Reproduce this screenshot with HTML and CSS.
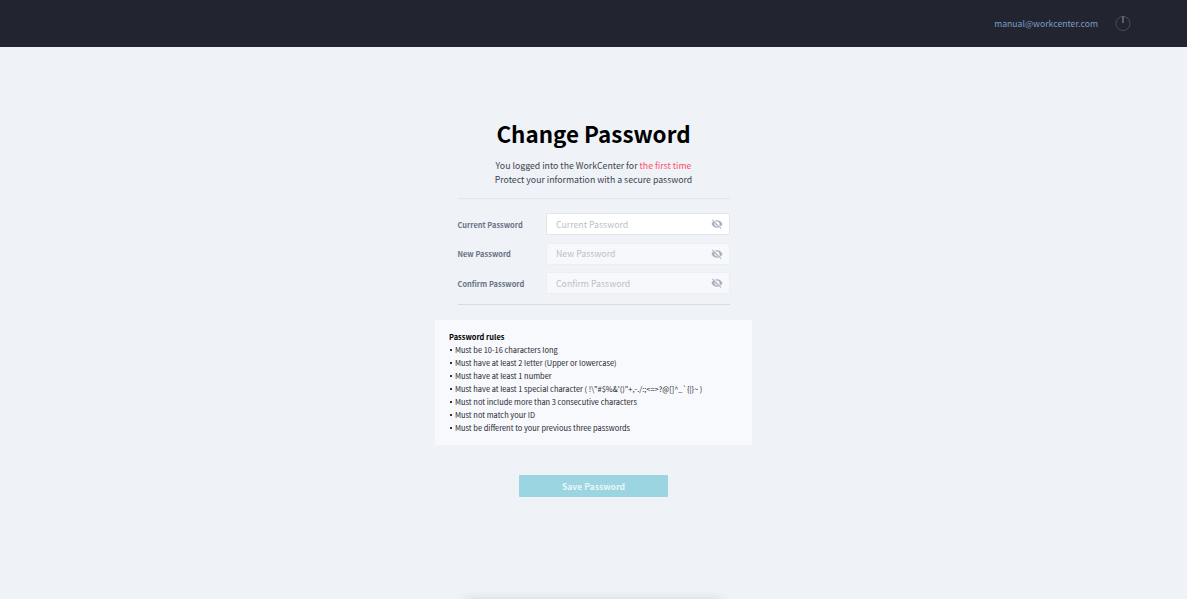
FILE: index.html
```html
<!DOCTYPE html>
<html lang="en">
<head>
  <meta charset="UTF-8">
  <meta name="viewport" content="width=device-width, initial-scale=1.0">
  <title>Change Password</title>
  <link rel="stylesheet" href="styles.css">
</head>
<body>
  <header class="topbar">
    <span class="user-email">manual@workcenter.com</span>
    <button class="power-btn" type="button" aria-label="Log out">
      <svg width="16" height="16" viewBox="0 0 16 16" fill="none">
        <circle cx="8" cy="8.5" r="7" stroke="#4a4e5a" stroke-width="1"/>
        <path d="M8 1v7" stroke="#6b6f7a" stroke-width="1.6"/>
      </svg>
    </button>
  </header>

  <main class="page">
    <h1 class="title">Change Password</h1>
    <p class="intro">
      You logged into the WorkCenter for <span class="red">the first time</span><br>
      Protect your information with a secure password
    </p>

    <form class="pw-form">
      <div class="row">
        <label for="current">Current Password</label>
        <div class="field active">
          <input type="password" id="current" placeholder="Current Password">
          <svg class="eye" viewBox="0 0 24 24"><path d="M12 7c2.76 0 5 2.24 5 5 0 .65-.13 1.26-.36 1.83l2.92 2.92c1.51-1.26 2.7-2.89 3.43-4.75-1.73-4.39-6-7.5-11-7.5-1.4 0-2.74.25-3.98.7l2.16 2.16C10.74 7.13 11.35 7 12 7zM2 4.27l2.28 2.28.46.46C3.08 8.3 1.78 10.02 1 12c1.73 4.39 6 7.5 11 7.5 1.55 0 3.03-.3 4.38-.84l.42.42L19.73 22 21 20.73 3.27 3 2 4.27zM7.53 9.8l1.55 1.55c-.05.21-.08.43-.08.65 0 1.66 1.34 3 3 3 .22 0 .44-.03.65-.08l1.55 1.55c-.67.33-1.41.53-2.2.53-2.76 0-5-2.24-5-5 0-.79.2-1.53.53-2.2z"/></svg>
        </div>
      </div>
      <div class="row">
        <label for="new">New Password</label>
        <div class="field">
          <input type="password" id="new" placeholder="New Password" disabled>
          <svg class="eye" viewBox="0 0 24 24"><path d="M12 7c2.76 0 5 2.24 5 5 0 .65-.13 1.26-.36 1.83l2.92 2.92c1.51-1.26 2.7-2.89 3.43-4.75-1.73-4.39-6-7.5-11-7.5-1.4 0-2.74.25-3.98.7l2.16 2.16C10.74 7.13 11.35 7 12 7zM2 4.27l2.28 2.28.46.46C3.08 8.3 1.78 10.02 1 12c1.73 4.39 6 7.5 11 7.5 1.55 0 3.03-.3 4.38-.84l.42.42L19.73 22 21 20.73 3.27 3 2 4.27zM7.53 9.8l1.55 1.55c-.05.21-.08.43-.08.65 0 1.66 1.34 3 3 3 .22 0 .44-.03.65-.08l1.55 1.55c-.67.33-1.41.53-2.2.53-2.76 0-5-2.24-5-5 0-.79.2-1.53.53-2.2z"/></svg>
        </div>
      </div>
      <div class="row">
        <label for="confirm">Confirm Password</label>
        <div class="field">
          <input type="password" id="confirm" placeholder="Confirm Password" disabled>
          <svg class="eye" viewBox="0 0 24 24"><path d="M12 7c2.76 0 5 2.24 5 5 0 .65-.13 1.26-.36 1.83l2.92 2.92c1.51-1.26 2.7-2.89 3.43-4.75-1.73-4.39-6-7.5-11-7.5-1.4 0-2.74.25-3.98.7l2.16 2.16C10.74 7.13 11.35 7 12 7zM2 4.27l2.28 2.28.46.46C3.08 8.3 1.78 10.02 1 12c1.73 4.39 6 7.5 11 7.5 1.55 0 3.03-.3 4.38-.84l.42.42L19.73 22 21 20.73 3.27 3 2 4.27zM7.53 9.8l1.55 1.55c-.05.21-.08.43-.08.65 0 1.66 1.34 3 3 3 .22 0 .44-.03.65-.08l1.55 1.55c-.67.33-1.41.53-2.2.53-2.76 0-5-2.24-5-5 0-.79.2-1.53.53-2.2z"/></svg>
        </div>
      </div>
    </form>

    <section class="rules">
      <h2>Password rules</h2>
      <ul>
        <li>Must be 10-16 characters long</li>
        <li>Must have at least 2 letter (Upper or lowercase)</li>
        <li>Must have at least 1 number</li>
        <li>Must have at least 1 special character ( !\"#$%&amp;'()"+,-./:;&lt;=&gt;?@[]^_`{|}~ )</li>
        <li>Must not include more than 3 consecutive characters</li>
        <li>Must not match your ID</li>
        <li>Must be different to your previous three passwords</li>
      </ul>
    </section>

    <button class="save-btn" type="button">Save Password</button>
  </main>
  <div class="bottom-shadow"></div>
</body>
</html>
```

FILE: styles.css
```css
* {
  box-sizing: border-box;
}

html, body {
  height: 100%;
}

body {
  margin: 0;
  background-color: #eff2f7;
  font-family: "Noto Sans CJK KR", "Noto Sans", sans-serif;
  overflow: hidden;
  position: relative;
}

.topbar {
  height: 47px;
  background-color: #22252f;
  display: flex;
  align-items: center;
  justify-content: flex-end;
  padding-right: 56px;
}

.user-email {
  font-size: 8.67px;
  line-height: 15px;
  color: #7d9cc9;
  margin-right: 17px;
}

.power-btn {
  width: 16px;
  height: 16px;
  padding: 0;
  margin-bottom: 2px;
  border: none;
  background: none;
  display: block;
}

.power-btn svg {
  display: block;
}

.page {
  display: flex;
  flex-direction: column;
  align-items: center;
  padding-top: 70px;
}

.title {
  margin: 0;
  font-size: 22.4px;
  line-height: 32px;
  font-weight: 700;
  color: #000;
}

.intro {
  margin: 10px 0 0;
  width: 272px;
  padding-bottom: 12px;
  font-size: 8.75px;
  line-height: 13.5px;
  text-align: center;
  color: #3c4250;
  border-bottom: 1px solid #e2e5ea;
}

.red {
  color: #ff4d6a;
}

.pw-form {
  width: 272px;
  padding: 14px 0 10px;
  border-bottom: 1px solid #d8dbe2;
  display: flex;
  flex-direction: column;
  gap: 7.5px;
}

.row {
  display: flex;
  align-items: center;
}

.row label {
  width: 88.5px;
  font-size: 7.45px;
  font-weight: 700;
  color: #6b7486;
}

.field {
  width: 183.5px;
  height: 22px;
  display: flex;
  align-items: center;
  padding: 0 6px 0 9px;
  background-color: #f7f8fb;
  border: 1px solid #eceef3;
  border-radius: 1px;
}

.field.active {
  background-color: #fff;
  border-color: #e3e6ec;
}

.field input {
  flex: 1;
  min-width: 0;
  border: none;
  padding: 0;
  background: none;
  outline: none;
  font-family: inherit;
  font-size: 8.75px;
}

.field input::placeholder {
  color: #b9bfca;
  opacity: 1;
}

.eye {
  width: 12px;
  height: 12px;
  fill: #a9b0bf;
}

.rules {
  margin-top: 15px;
  width: 317px;
  height: 125px;
  padding: 10px 14px;
  background-color: #f7f9fc;
  color: #1f2430;
}

.rules h2 {
  margin: 0;
  font-size: 7.45px;
  line-height: 13px;
  font-weight: 700;
  color: #000;
}

.rules ul {
  margin: 0;
  padding: 0;
  list-style: none;
}

.rules li {
  font-size: 7.45px;
  line-height: 13px;
  padding-left: 6px;
  position: relative;
}

.rules li::before {
  content: '';
  position: absolute;
  left: 1px;
  top: 5.5px;
  width: 2px;
  height: 2px;
  background-color: #333;
}

.save-btn {
  margin-top: 30px;
  width: 149px;
  height: 22px;
  border: none;
  border-radius: 1px;
  padding: 0;
  background-color: #9cd5e2;
  color: #e9f6f9;
  font-family: inherit;
  font-size: 8.6px;
  font-weight: 700;
}

.bottom-shadow {
  position: absolute;
  left: 465px;
  bottom: -12px;
  width: 255px;
  height: 12px;
  box-shadow: 0 0 10px rgba(120, 130, 150, 0.22);
}
```
